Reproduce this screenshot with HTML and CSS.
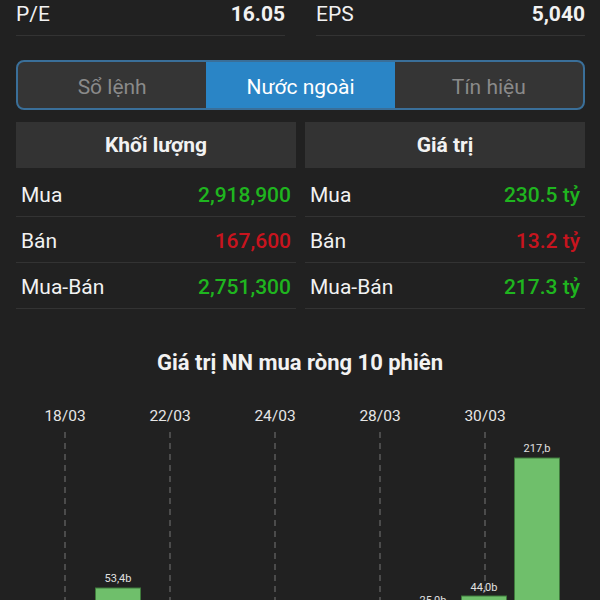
FILE: index.html
```html
<!DOCTYPE html>
<html lang="vi">
<head>
<meta charset="utf-8">
<link rel="stylesheet" href="styles.css">
</head>
<body>
<div class="page">
  <div class="stats">
    <div class="stat"><span class="stat-label">P/E</span><span class="stat-value">16.05</span></div>
    <div class="stat"><span class="stat-label">EPS</span><span class="stat-value">5,040</span></div>
  </div>

  <div class="tabs">
    <div class="tab">Sổ lệnh</div>
    <div class="tab active">Nước ngoài</div>
    <div class="tab">Tín hiệu</div>
  </div>

  <div class="tables">
    <div class="table">
      <div class="thead">Khối lượng</div>
      <div class="row"><span>Mua</span><span class="up">2,918,900</span></div>
      <div class="row"><span>Bán</span><span class="down">167,600</span></div>
      <div class="row"><span>Mua-Bán</span><span class="up">2,751,300</span></div>
    </div>
    <div class="table">
      <div class="thead">Giá trị</div>
      <div class="row"><span>Mua</span><span class="up">230.5 tỷ</span></div>
      <div class="row"><span>Bán</span><span class="down">13.2 tỷ</span></div>
      <div class="row"><span>Mua-Bán</span><span class="up">217.3 tỷ</span></div>
    </div>
  </div>

  <h2 class="chart-title">Giá trị NN mua ròng 10 phiên</h2>

  <svg class="chart" width="600" height="260" viewBox="0 0 600 260">
    <g class="dates">
      <text x="65" y="26">18/03</text>
      <text x="170" y="26">22/03</text>
      <text x="275" y="26">24/03</text>
      <text x="380" y="26">28/03</text>
      <text x="485" y="26">30/03</text>
    </g>
    <g class="grid">
      <line x1="65" y1="37" x2="65" y2="260"/>
      <line x1="170" y1="37" x2="170" y2="260"/>
      <line x1="275" y1="37" x2="275" y2="260"/>
      <line x1="380" y1="37" x2="380" y2="260"/>
      <line x1="485" y1="37" x2="485" y2="260"/>
    </g>
    <g class="bars">
      <rect x="95.5" y="193" width="45" height="60"/>
      <rect x="410.5" y="215.5" width="45" height="40"/>
      <rect x="461.5" y="201" width="45" height="60"/>
      <rect x="514.5" y="63" width="45" height="200"/>
    </g>
    <g class="vals">
      <text x="118" y="187">53,4b</text>
      <text x="433" y="209">25,0b</text>
      <text x="484" y="196">44,0b</text>
      <text x="537" y="57">217,b</text>
    </g>
  </svg>
</div>
</body>
</html>
```

FILE: styles.css
```css
* { box-sizing: border-box; }
html, body {
  margin: 0;
  background: #212121;
  overflow: hidden;
}
body {
  font-family: Roboto, "Noto Sans", sans-serif;
  color: #f2f2f2;
}
.page {
  width: 600px;
  padding: 0 15px 0 16px;
}
.stats {
  display: flex;
  gap: 31px;
}
.stat {
  flex: 1;
  display: flex;
  justify-content: space-between;
  height: 36px;
  padding-top: 2px;
  line-height: 25px;
  font-size: 21px;
  border-bottom: 1px solid #333;
}
.stat-value { font-weight: 700; }

.tabs {
  display: flex;
  margin-top: 24px;
  height: 50px;
  border: 2px solid #3a6f99;
  border-radius: 8px;
  overflow: hidden;
  background: #353535;
}
.tab {
  flex: 1;
  display: flex;
  align-items: center;
  justify-content: center;
  padding-top: 4px;
  font-size: 21px;
  color: #8a8a8a;
}
.tab.active {
  background: #2a85c6;
  color: #fff;
}

.tables {
  display: flex;
  gap: 9px;
  margin-top: 12px;
}
.table { flex: 1; }
.thead {
  height: 46px;
  background: #333;
  display: flex;
  align-items: center;
  justify-content: center;
  font-weight: 700;
  font-size: 21px;
}
.row {
  height: 46px;
  display: flex;
  align-items: center;
  justify-content: space-between;
  padding: 2px 5px 0 5px;
  font-size: 21px;
  border-bottom: 1px solid #333;
}
.table .row:nth-child(2) { height: 49px; padding-top: 5px; }
.up, .down { font-weight: 500; }
.up { color: #1fb51f; }
.down { color: #c8141e; }

.chart-title {
  margin: 41px 0 0 -16px;
  width: 600px;
  text-align: center;
  font-size: 22px;
  font-weight: 700;
  line-height: 26px;
}
.chart {
  display: block;
  margin: 19px 0 0 -16px;
}
.dates text {
  font-family: Roboto, sans-serif;
  font-size: 15.5px;
  fill: #e6e6e6;
  text-anchor: middle;
}
.grid line {
  stroke: #777;
  stroke-width: 1;
  stroke-dasharray: 6 5;
}
.bars rect {
  fill: #6fbf6b;
  stroke: #3f7a3c;
  stroke-width: 1;
}
.vals text {
  font-family: Roboto, sans-serif;
  font-size: 11px;
  fill: #e0e0e0;
  text-anchor: middle;
}
```
